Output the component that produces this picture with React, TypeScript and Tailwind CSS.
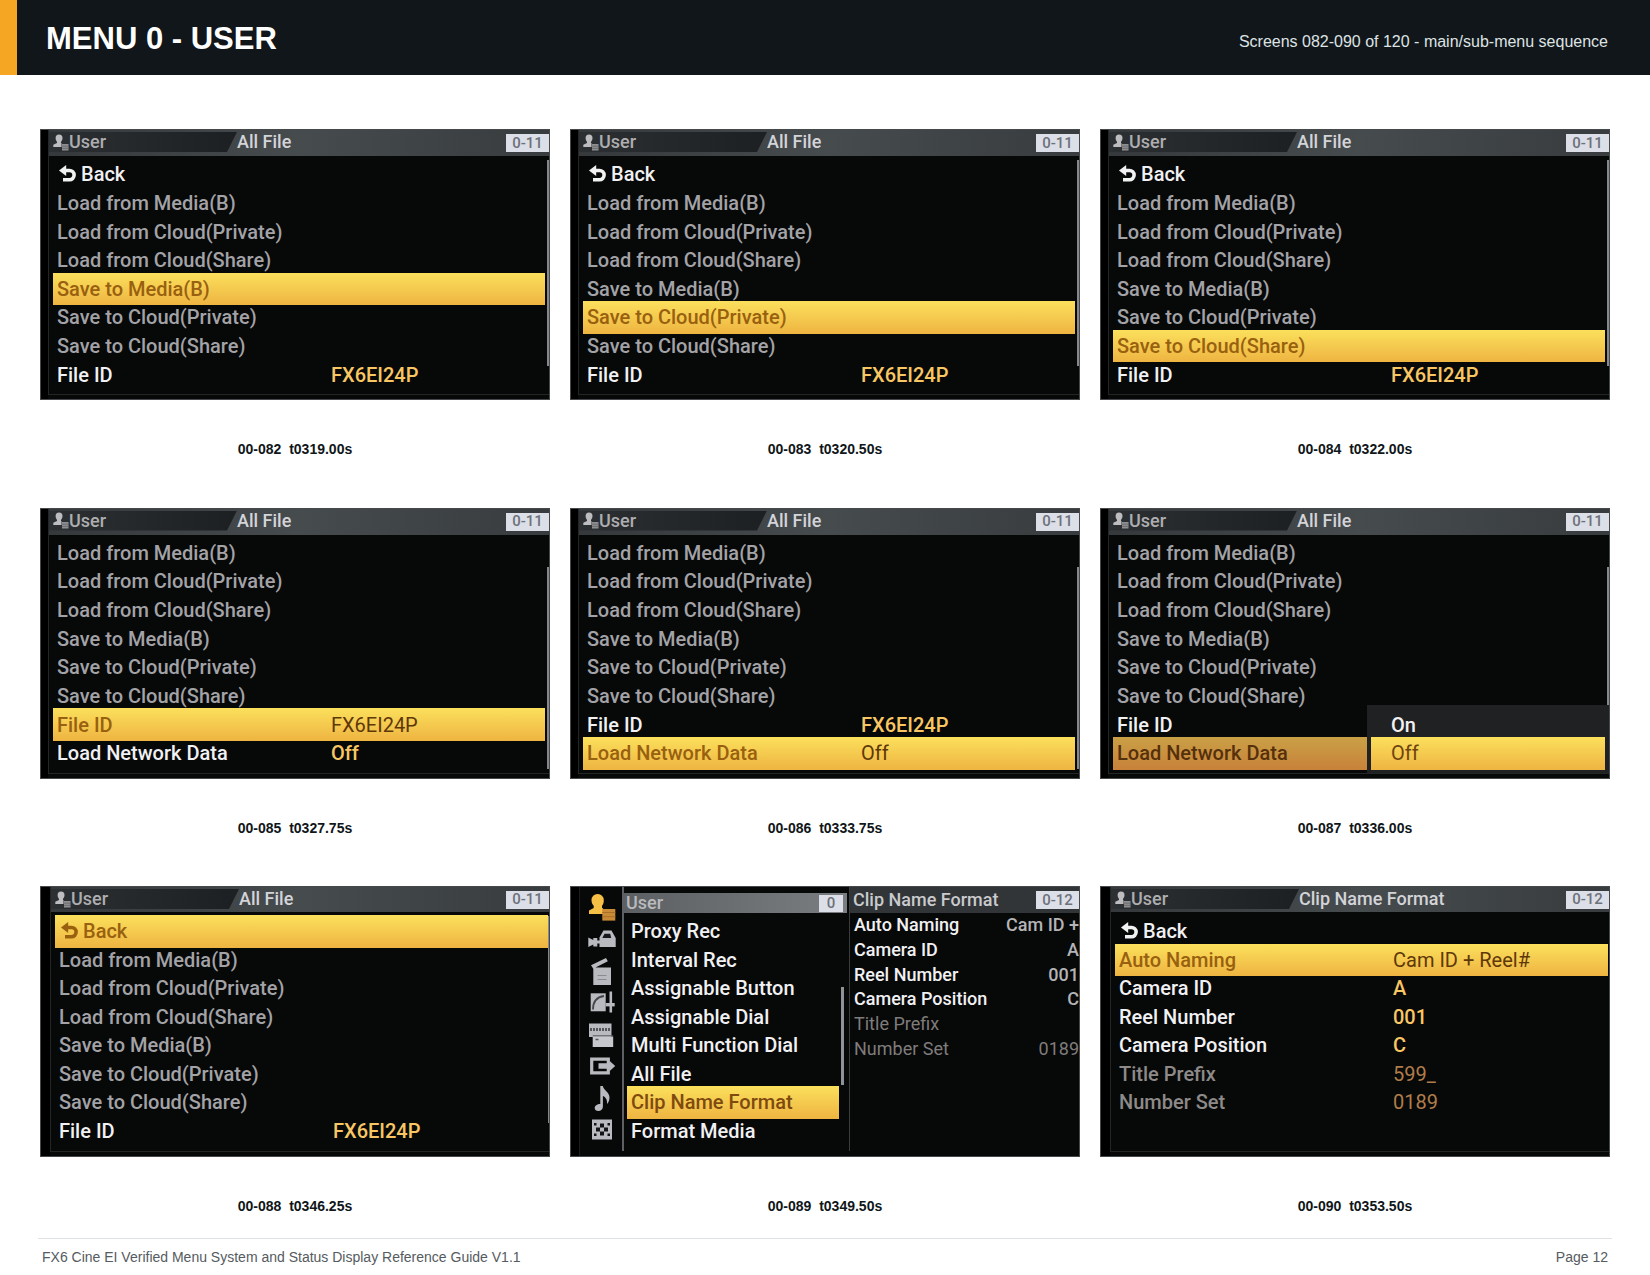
import { ReactNode } from 'react';
import clsx from 'clsx';

type Tone = 'normal' | 'dim' | 'faded';

interface MenuItem {
  label: string;
  value?: string;
  tone?: Tone;
  back?: boolean;
}

interface MenuScreenProps {
  title: string;
  code: string;
  items: MenuItem[];
  selected: string;
  scroll?: 'top' | 'bottom';
  options?: string[];
  shifted?: boolean;
}

const BACK: MenuItem = { label: 'Back', back: true };
const FILE_ID: MenuItem = { label: 'File ID', value: 'FX6EI24P' };
const NETWORK: MenuItem = { label: 'Load Network Data', value: 'Off' };

const FILE_ACTIONS: MenuItem[] = [
  { label: 'Load from Media(B)', tone: 'dim' },
  { label: 'Load from Cloud(Private)', tone: 'dim' },
  { label: 'Load from Cloud(Share)', tone: 'dim' },
  { label: 'Save to Media(B)', tone: 'dim' },
  { label: 'Save to Cloud(Private)', tone: 'dim' },
  { label: 'Save to Cloud(Share)', tone: 'dim' },
];

const ALL_FILE_TOP = [BACK, ...FILE_ACTIONS, FILE_ID];
const ALL_FILE_BOTTOM = [...FILE_ACTIONS, FILE_ID, NETWORK];

const CLIP_NAME: MenuItem[] = [
  BACK,
  { label: 'Auto Naming', value: 'Cam ID + Reel#' },
  { label: 'Camera ID', value: 'A' },
  { label: 'Reel Number', value: '001' },
  { label: 'Camera Position', value: 'C' },
  { label: 'Title Prefix', value: '599_', tone: 'faded' },
  { label: 'Number Set', value: '0189', tone: 'faded' },
];

const USER_MENU = [
  'Proxy Rec',
  'Interval Rec',
  'Assignable Button',
  'Assignable Dial',
  'Multi Function Dial',
  'All File',
  'Clip Name Format',
  'Format Media',
];

const PREVIEW: MenuItem[] = [
  { label: 'Auto Naming', value: 'Cam ID +' },
  { label: 'Camera ID', value: 'A' },
  { label: 'Reel Number', value: '001' },
  { label: 'Camera Position', value: 'C' },
  { label: 'Title Prefix', tone: 'faded' },
  { label: 'Number Set', value: '0189', tone: 'faded' },
];

const labelTone: Record<Tone, string> = {
  normal: 'text-[#f1f1f4]',
  dim: 'text-[#a3a3a7]',
  faded: 'text-[#8d8a89]',
};

const highlight = 'bg-linear-to-b from-[#fbe05c] to-[#eeb441]';

const UserIcon = (): JSX.Element => (
  <svg viewBox="0 0 16 17" className="w-4 h-[17px]" aria-hidden="true">
    <path
      d="M6 .5a3.600 3.600 0 0 0-3.400 3.600c0 1.800.700 3 1.400 3.800V9L.3 10.800V13H8.500V9.300l-.5-.400V7.900c.800-.800 1.500-2 1.500-3.800A3.500 3.500 0 0 0 6 .5z"
      fill="#bdbdc0"
    />
    <path d="M9 10h6.500v6.500H9z" fill="#8f8f92" />
    <path d="M9 12.200h6.500M9 14.400h6.500" stroke="#55585a" strokeWidth=".6" />
  </svg>
);

const BackIcon = (): JSX.Element => (
  <svg viewBox="0 0 18 18" className="w-[18px] h-[18px]" aria-hidden="true">
    <path
      d="M5 5.500h5.500a4.600 4.600 0 0 1 0 9.200H4"
      fill="none"
      stroke="currentColor"
      strokeWidth="3.600"
    />
    <path d="M0 5.500 7.200 0v11z" fill="currentColor" />
  </svg>
);

const Badge = ({ children }: { children: ReactNode }): JSX.Element => (
  <span className="flex items-center justify-center w-[43px] h-[18px] bg-[#dcdfe8] text-[15px] leading-none font-medium text-[#6d717a]">
    {children}
  </span>
);

const Screen = ({ children }: { children: ReactNode }): JSX.Element => (
  <div className="relative flex overflow-hidden aspect-[510/271] border border-[#45494c] bg-[#070808] font-[Roboto,sans-serif]">
    {children}
  </div>
);

const MenuScreen = ({
  title,
  code,
  items,
  selected,
  scroll,
  options,
  shifted = false,
}: MenuScreenProps): JSX.Element => (
  <Screen>
    <div className={clsx('shrink-0 bg-black', shifted ? 'w-[9px]' : 'w-[7px]')} />
    <div className="flex flex-col flex-1 min-w-0 mb-1 border-b border-l border-[#242626]">
      <div
        className={clsx(
          'flex items-center justify-between shrink-0 bg-linear-to-r from-[#35393b] via-[#464b4e] to-[#383c3f]',
          shifted ? 'h-[25px]' : 'h-[26px]'
        )}
      >
        <div className="flex flex-1 h-full pt-0.5">
          <div className="flex items-center w-[188px] h-5 pl-1 bg-linear-to-r from-[#2c3032] to-[#1d2022] text-[18px] leading-none font-medium text-[#aeaeb1] [clip-path:polygon(0_0,100%_0,calc(100%-10px)_100%,0_100%)]">
            <UserIcon />
            User
          </div>
          <span className="text-[18px] leading-5 font-medium text-[#d3d4d8]">
            {title}
          </span>
        </div>
        <Badge>{code}</Badge>
      </div>
      <div className="relative flex flex-1">
        <ul
          className={clsx(
            'grid flex-1 grid-rows-8',
            shifted ? 'pt-[5px] pb-1.5' : 'pt-1 pb-[5px]'
          )}
        >
          {items.map((item) => {
            const active = item.label === selected;
            return (
              <li
                key={item.label}
                className={clsx('flex pl-1', shifted ? 'pr-px' : 'pr-1')}
              >
                <button
                  type="button"
                  className={clsx(
                    'flex items-center flex-1 pl-1 -my-0.5 text-[20px] leading-none font-medium text-left',
                    active
                      ? clsx(
                          'z-10',
                          options
                            ? 'bg-linear-to-b from-[#c9a046] to-[#c8813a] text-[#55300c]'
                            : [highlight, 'text-[#98600f]']
                        )
                      : labelTone[item.tone ?? 'normal']
                  )}
                >
                  <span className="flex items-center gap-1 w-[274px]">
                    {item.back && (
                      <span className="pl-0.5">
                        <BackIcon />
                      </span>
                    )}
                    {item.label}
                  </span>
                  {item.value && !options && (
                    <span
                      className={clsx(
                        active
                          ? 'font-normal text-[#5f3809]'
                          : item.tone === 'faded'
                            ? 'font-normal text-[#b07d4a]'
                            : 'text-[#f8c663]'
                      )}
                    >
                      {item.value}
                    </span>
                  )}
                </button>
              </li>
            );
          })}
        </ul>
        {scroll && (
          <div
            className={clsx(
              'absolute right-0 bg-[#85888c]',
              shifted ? 'w-px' : 'w-0.5',
              scroll === 'top' ? 'top-1 bottom-7' : 'top-8 bottom-1'
            )}
          />
        )}
        {options && (
          <ul className="absolute right-0 bottom-0 z-20 grid w-[242px] grid-rows-2 h-[68px] pt-1.5 pb-[5px] pl-1 pr-1 bg-[#1f2123]">
            {options.map((option) => (
              <li key={option} className="flex">
                <button
                  type="button"
                  className={clsx(
                    'flex items-center flex-1 pl-5 -my-0.5 text-[20px] leading-none',
                    option === 'Off'
                      ? [highlight, 'text-[#6f4410]']
                      : 'font-medium text-[#f1f1f4]'
                  )}
                >
                  {option}
                </button>
              </li>
            ))}
          </ul>
        )}
      </div>
    </div>
  </Screen>
);

// Category icons down the left edge of the main menu
const CategoryIcons = (): JSX.Element => (
  <svg
    viewBox="0 0 42 264"
    className="w-[42px] h-[264px] shrink-0"
    fill="#b9bac0"
    aria-hidden="true"
  >
    <g>
      <path
        d="M17.500 7a6 6 0 0 0-6 6.200c0 2.600 1 4.300 2.200 5.500v2.300L9 23.500V27h14v-5.500l-1-.700v-2.100c1.200-1.200 1.800-2.900 1.800-5.500A6 6 0 0 0 17.500 7z"
        fill="#f6bf45"
      />
      <path d="M22.300 22h13v11.600h-13z" fill="#c98b35" />
      <path d="M22.300 25.500h13M22.300 29.700h13" stroke="#a9702a" />
    </g>
    <g>
      <path d="M8.300 50.500l5 2.500v-2h4v8.500h-4v-2l-5 2.500z" />
      <path d="M19.500 60V50.500l4-7h8l4.200 7.500v9z" />
      <path d="M22.300 51l2.200-4.300h5.700l1 4.300z" fill="#17181a" />
      <path d="M17 53.500h4v3h-4z" />
    </g>
    <g>
      <path d="M11 78.200 26 71l1.800 3.200-12.300 6.300H31V98H13.300V81.700z" />
      <path d="M17.500 88.500h9M17.500 92.500h9" stroke="#8a8b90" />
    </g>
    <g>
      <path d="M10.700 106.300h15v18h-15z" />
      <path d="M13 122.500c0-7.500 3.500-12.500 11-13.500" fill="none" stroke="#45474b" strokeWidth="1.800" />
      <path d="M29.500 104.500h2.600v21h-2.600z" />
      <path d="M25.700 116h9v3.400h-9z" />
    </g>
    <g>
      <path d="M9 136.500h22.500V150H9z" />
      <path d="M10 142.500h20.500" stroke="#55575b" strokeWidth="3" strokeDasharray="2 1" />
      <path d="M12.700 149.500h20.500V160H12.700z" fill="#c7c8cd" />
      <path d="M12.700 148.800h20.500" stroke="#55575b" />
      <path d="M15.500 152.500h3" stroke="#55575b" strokeWidth="1.500" />
    </g>
    <g>
      <path
        d="M11.700 172.200h16.600v13.600H11.700z"
        fill="none"
        stroke="#b9bac0"
        strokeWidth="3.200"
      />
      <path d="M18.500 176.300h11v-2.500l5.700 5.200-5.700 5.200v-2.500h-11z" />
    </g>
    <g>
      <path d="M20.300 199h2.600c.4 4 6.600 6 6.600 11.500 0 3-1 5-2.500 6.500.3-4-.800-6.500-4.100-8v10.700c0 2.500-2 4.300-4.500 4.300-2.200 0-3.700-1.200-3.700-3 0-2.300 2.300-4 5.600-4z" />
    </g>
    <g>
      <path d="M12 232.500h20v20H12z" />
      <path
        d="M20 236.500h4v4h-4zM16 240.500h4v4h-4zM24 240.500h4v4h-4zM20 244.500h4v4h-4zM14 236h2.500v2.500H14zM27.500 236H30v2.500h-2.500zM14 246.500h2.500v2.500H14zM27.500 246.500H30v2.500h-2.500z"
        fill="#121315"
      />
    </g>
  </svg>
);

const MainMenuScreen = (): JSX.Element => (
  <Screen>
    <div className="shrink-0 w-[9px] bg-black border-r border-[#1c1d1e]" />
    <CategoryIcons />
    <div className="w-0.5 h-[264px] shrink-0 bg-[#5e6163]" />
    <div className="relative flex flex-col w-[225px] shrink-0 h-[264px]">
      <div className="flex items-center justify-between shrink-0 h-5 mt-1.5 pl-0.5 pr-1 mr-0.5 bg-linear-to-r from-[#5d6063] to-[#7b7e81] text-[18px] leading-none font-medium text-[#b9babd]">
        User
        <span className="flex items-center justify-center w-6 h-[17px] bg-[#dcdfe8] text-[15px] text-[#6d717a]">
          0
        </span>
      </div>
      <ul className="grid flex-1 grid-rows-8 pt-1 pb-1.5 pl-[3px] pr-2.5">
        {USER_MENU.map((label) => (
          <li key={label} className="flex">
            <button
              type="button"
              className={clsx(
                'flex items-center flex-1 pl-1 -my-0.5 text-[20px] leading-none font-medium',
                label === 'Clip Name Format'
                  ? ['z-10 text-[#7f4a10]', highlight]
                  : 'text-[#f1f1f4]'
              )}
            >
              {label}
            </button>
          </li>
        ))}
      </ul>
      <div className="absolute right-[5px] top-[100px] w-[3px] h-[98px] bg-[#8f9296]" />
    </div>
    <div className="flex flex-col flex-1 min-w-0 h-[264px] border-l border-[#3a3c3e]">
      <div className="flex items-center justify-between shrink-0 h-[26px] pl-[3px] bg-[#313537] text-[18px] leading-none font-medium text-[#c9cacd]">
        Clip Name Format
        <Badge>0-12</Badge>
      </div>
      <dl className="grid grid-rows-6 h-[148px] pl-1">
        {PREVIEW.map(({ label, value, tone = 'normal' }) => (
          <div
            key={label}
            className={clsx(
              'flex items-center justify-between text-[18px] leading-none',
              tone === 'faded' ? 'text-[#7f7c7b]' : 'font-medium text-[#f1f1f4]'
            )}
          >
            <dt>{label}</dt>
            <dd className={clsx(tone === 'normal' && 'text-[#b4b4b7]')}>{value}</dd>
          </div>
        ))}
      </dl>
    </div>
  </Screen>
);

const SCREENS: { id: string; time: string; screen: JSX.Element }[] = [
  {
    id: '00-082',
    time: 't0319.00s',
    screen: (
      <MenuScreen title="All File" code="0-11" items={ALL_FILE_TOP} selected="Save to Media(B)" scroll="top" />
    ),
  },
  {
    id: '00-083',
    time: 't0320.50s',
    screen: (
      <MenuScreen title="All File" code="0-11" items={ALL_FILE_TOP} selected="Save to Cloud(Private)" scroll="top" />
    ),
  },
  {
    id: '00-084',
    time: 't0322.00s',
    screen: (
      <MenuScreen title="All File" code="0-11" items={ALL_FILE_TOP} selected="Save to Cloud(Share)" scroll="top" />
    ),
  },
  {
    id: '00-085',
    time: 't0327.75s',
    screen: (
      <MenuScreen title="All File" code="0-11" items={ALL_FILE_BOTTOM} selected="File ID" scroll="bottom" />
    ),
  },
  {
    id: '00-086',
    time: 't0333.75s',
    screen: (
      <MenuScreen title="All File" code="0-11" items={ALL_FILE_BOTTOM} selected="Load Network Data" scroll="bottom" />
    ),
  },
  {
    id: '00-087',
    time: 't0336.00s',
    screen: (
      <MenuScreen
        title="All File"
        code="0-11"
        items={ALL_FILE_BOTTOM}
        selected="Load Network Data"
        scroll="bottom"
        options={['On', 'Off']}
      />
    ),
  },
  {
    id: '00-088',
    time: 't0346.25s',
    screen: (
      <MenuScreen title="All File" code="0-11" items={ALL_FILE_TOP} selected="Back" scroll="top" shifted />
    ),
  },
  { id: '00-089', time: 't0349.50s', screen: <MainMenuScreen /> },
  {
    id: '00-090',
    time: 't0353.50s',
    screen: (
      <MenuScreen title="Clip Name Format" code="0-12" items={CLIP_NAME} selected="Auto Naming" shifted />
    ),
  },
];

const App = (): JSX.Element => (
  <div className="flex flex-col min-h-screen bg-white font-['Liberation_Sans',Arial,sans-serif]">
    <header className="flex items-center justify-between h-[75px] pl-[29px] pr-[42px] border-l-[17px] border-[#f5a623] bg-[#101619]">
      <h1 className="pt-0.5 text-[31px] leading-9 font-bold text-white">
        MENU 0 - USER
      </h1>
      <p className="pt-2 text-[16px] leading-6 text-[#dfe3e5]">
        Screens 082-090 of 120 - main/sub-menu sequence
      </p>
    </header>
    <main className="grid content-between flex-1 grid-cols-3 gap-x-5 px-10 pt-[54px] pb-6">
      {SCREENS.map(({ id, time, screen }) => (
        <figure key={id}>
          {screen}
          <figcaption className="mt-[41px] text-[14px] leading-4 font-bold text-center whitespace-pre text-[#101619]">
            {`${id}  ${time}`}
          </figcaption>
        </figure>
      ))}
    </main>
    <footer className="flex justify-between mx-[38px] h-[37px] pl-1 pr-1 border-t border-[#dfe2e4] text-[14px] leading-9 text-[#555b60]">
      <p>FX6 Cine EI Verified Menu System and Status Display Reference Guide V1.1</p>
      <p>Page 12</p>
    </footer>
  </div>
);

export default App;
